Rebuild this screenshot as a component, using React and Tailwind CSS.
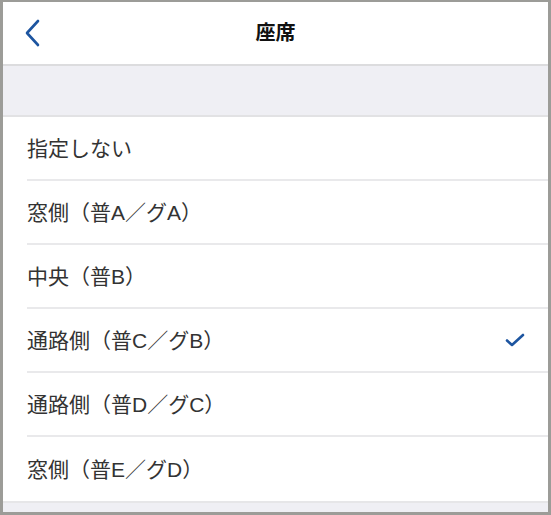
import React from 'react';

const options = [
  { label: '指定しない' },
  { label: '窓側（普A／グA）' },
  { label: '中央（普B）' },
  { label: '通路側（普C／グB）', checked: true },
  { label: '通路側（普D／グC）' },
  { label: '窓側（普E／グD）' },
];

function ChevronLeft() {
  return (
    <svg width="16" height="28" viewBox="0 0 16 28" fill="none">
      <path d="M13 2 L2 14 L13 26" stroke="#1d55a0" strokeWidth="2.6" strokeLinecap="round" strokeLinejoin="round" />
    </svg>
  );
}

function Check() {
  return (
    <svg width="20" height="16" viewBox="0 0 20 16" fill="none">
      <path d="M2 8.5 L7 13 L18 3" stroke="#1d55a0" strokeWidth="2.6" strokeLinecap="round" strokeLinejoin="round" />
    </svg>
  );
}

export default function App() {
  return (
    <div
      className="w-[551px] h-[515px] overflow-hidden border-t-2 border-l-[3px] border-r-[3px] border-b-[3px] border-[#9c9c98] bg-white flex flex-col"
      style={{ fontFamily: '"Liberation Sans", "Noto Sans CJK JP", sans-serif' }}
    >
      {/* Header */}
      <div className="h-[64px] shrink-0 flex items-center relative border-b-2 border-[#dcdcde]">
        <div className="absolute left-[22px] top-[17px]">
          <ChevronLeft />
        </div>
        <div className="flex-1 text-center text-[20px] font-bold text-[#111] leading-none">座席</div>
      </div>

      {/* Section gap */}
      <div className="h-[51px] shrink-0 bg-[#efeff4] border-b-2 border-[#e2e2e4]" />

      {/* Options */}
      <div className="flex flex-col">
        {options.map((o, i) => (
          <div key={i} className="pl-[24px]">
            <div
              className={
                'h-[64px] flex items-center justify-between pr-[23px] ' +
                (i < options.length - 1 ? 'border-b-2 border-[#e9e9eb]' : '')
              }
            >
              <span className="text-[21px] text-[#333] leading-none">{o.label}</span>
              {o.checked && <Check />}
            </div>
          </div>
        ))}
      </div>

      <div className="flex-1 bg-[#efeff4] border-t-2 border-[#e6e6e8]" />
    </div>
  );
}
